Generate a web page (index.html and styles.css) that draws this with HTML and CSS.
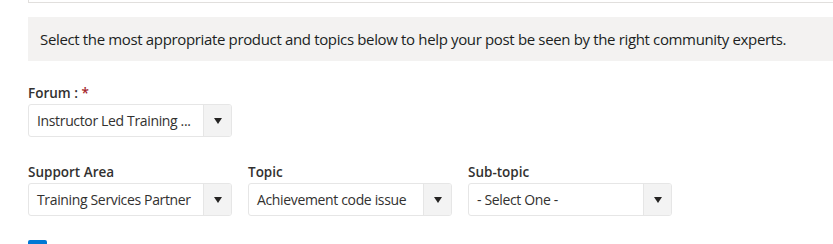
FILE: index.html
```html
<html lang="en">
<head>
    <meta charset="UTF-8">
    <title>Post details</title>
    <link rel="stylesheet" href="styles.css">
</head>
<body>
    <div id="container">
        <div class="top-field"></div>

        <div class="notice">
            Select the most appropriate product and topics below to help your post be seen by the right community experts.
        </div>

        <div class="field">
            <label class="label">Forum : <span class="req">*</span></label>
            <div class="select">
                <span class="value">Instructor Led Training ...</span>
                <span class="arrow"></span>
            </div>
        </div>

        <div class="row">
            <div class="field">
                <label class="label">Support Area</label>
                <div class="select">
                    <span class="value">Training Services Partner</span>
                    <span class="arrow"></span>
                </div>
            </div>
            <div class="field">
                <label class="label">Topic</label>
                <div class="select">
                    <span class="value">Achievement code issue</span>
                    <span class="arrow"></span>
                </div>
            </div>
            <div class="field">
                <label class="label">Sub-topic</label>
                <div class="select">
                    <span class="value">- Select One -</span>
                    <span class="arrow"></span>
                </div>
            </div>
        </div>

        <div class="check"></div>
    </div>
</body>
</html>
```

FILE: styles.css
```css
*{
    margin: 0;
    padding: 0;
    box-sizing: border-box;
}
body{
    font-family: "Open Sans", "Noto Sans", sans-serif;
    color: #323130;
    background: #fff;
    overflow: hidden;
}

#container{
    padding-left: 28px;
}

.top-field{
    height: 3px;
    border: 1px solid #e1dfdd;
    border-top: 0;
    border-right: 0;
}

.notice{
    margin-top: 14px;
    height: 44px;
    background: #f3f2f1;
    padding-left: 12px;
    line-height: 44px;
    font-size: 15px;
    letter-spacing: -0.35px;
    color: #201f1e;
    white-space: nowrap;
}

.field{
    width: 204px;
}
.notice + .field{
    margin-top: 21px;
}

.label{
    display: block;
    height: 22px;
    line-height: 22px;
    font-size: 13.5px;
    font-weight: 600;
    color: #323130;
}
.req{
    color: #a4262c;
}

.select{
    display: flex;
    height: 33px;
    border: 1px solid #e6e6e6;
    border-radius: 3px;
    overflow: hidden;
}
.value{
    flex: 1;
    padding-left: 8px;
    line-height: 32px;
    font-size: 14px;
    letter-spacing: -0.35px;
    color: #323130;
    white-space: nowrap;
}
.arrow{
    width: 28px;
    background: #f3f3f3;
    border-left: 1px solid #e6e6e6;
    position: relative;
}
.arrow:after{
    content: "";
    position: absolute;
    left: 10px;
    top: 13px;
    border-left: 4px solid transparent;
    border-right: 4px solid transparent;
    border-top: 6px solid #252423;
}

.row{
    display: flex;
    gap: 16px;
    margin-top: 24px;
}

.check{
    margin-top: 24px;
    width: 19px;
    height: 19px;
    border-radius: 2px;
    background: #0078d4;
}
```
